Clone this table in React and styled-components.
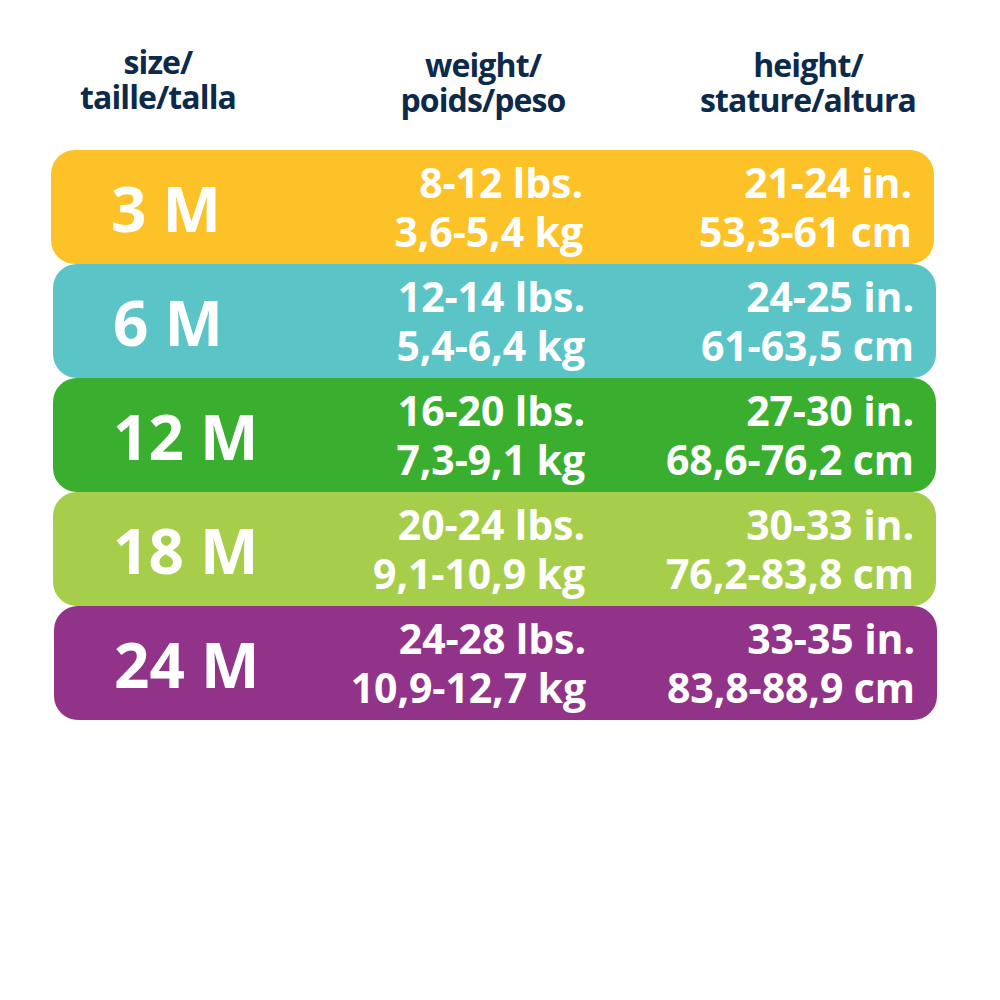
import React from "react";
import styled, { createGlobalStyle } from "styled-components";

const GlobalStyle = createGlobalStyle`
  html, body {
    margin: 0;
    padding: 0;
    background: #ffffff;
  }
  body {
    font-family: "Open Sans", "Noto Sans", sans-serif;
  }
`;

const Page = styled.div`
  width: 1000px;
  height: 1000px;
  background: #ffffff;
  padding-top: 44px;
  box-sizing: border-box;
`;

const Header = styled.div`
  display: grid;
  grid-template-columns: 52px 212px 118px 202px 116px 216px;
  height: 106px;
`;

const HeadCell = styled.div`
  grid-column: ${(p) => p.col};
  text-align: center;
  font-family: "Open Sans", "Noto Sans", sans-serif;
  font-weight: 700;
  font-size: 32px;
  line-height: 35px;
  letter-spacing: -0.9px;
  color: #0d2a4a;
  padding-top: ${(p) => p.offset || 0}px;
`;

const Table = styled.div`
  display: flex;
  flex-direction: column;
`;

const Row = styled.div`
  display: grid;
  grid-template-columns: 176px 296px 1fr;
  align-items: center;
  height: 114px;
  margin-left: ${(p) => p.shift}px;
  width: 883px;
  box-sizing: border-box;
  padding-left: 60px;
  padding-right: 22px;
  border-radius: 24px;
  background: ${(p) => p.bg};
  color: #ffffff;
`;

const Size = styled.div`
  font-weight: 700;
  font-size: 62px;
  padding-top: 2px;
  white-space: nowrap;
`;

const Values = styled.div`
  text-align: right;
  font-weight: 700;
  font-size: 41px;
  line-height: 49px;
  letter-spacing: -0.1px;
  white-space: nowrap;
`;

const rows = [
  { size: "3 M", bg: "#fdc227", shift: 51, w: ["8-12 lbs.", "3,6-5,4 kg"], h: ["21-24 in.", "53,3-61 cm"] },
  { size: "6 M", bg: "#5bc4c6", shift: 53, w: ["12-14 lbs.", "5,4-6,4 kg"], h: ["24-25 in.", "61-63,5 cm"] },
  { size: "12 M", bg: "#3aae2e", shift: 53, w: ["16-20 lbs.", "7,3-9,1 kg"], h: ["27-30 in.", "68,6-76,2 cm"] },
  { size: "18 M", bg: "#a6ce4b", shift: 53, w: ["20-24 lbs.", "9,1-10,9 kg"], h: ["30-33 in.", "76,2-83,8 cm"] },
  { size: "24 M", bg: "#92338a", shift: 54, w: ["24-28 lbs.", "10,9-12,7 kg"], h: ["33-35 in.", "83,8-88,9 cm"] },
];

export default function App() {
  return (
    <Page>
      <GlobalStyle />
      <Header>
        <HeadCell col={2}>
          size/
          <br />
          taille/talla
        </HeadCell>
        <HeadCell col={4} offset={3}>
          weight/
          <br />
          poids/peso
        </HeadCell>
        <HeadCell col={6} offset={3}>
          height/
          <br />
          stature/altura
        </HeadCell>
      </Header>
      <Table>
        {rows.map((r) => (
          <Row key={r.size} bg={r.bg} shift={r.shift}>
            <Size>{r.size}</Size>
            <Values>
              {r.w[0]}
              <br />
              {r.w[1]}
            </Values>
            <Values>
              {r.h[0]}
              <br />
              {r.h[1]}
            </Values>
          </Row>
        ))}
      </Table>
    </Page>
  );
}
